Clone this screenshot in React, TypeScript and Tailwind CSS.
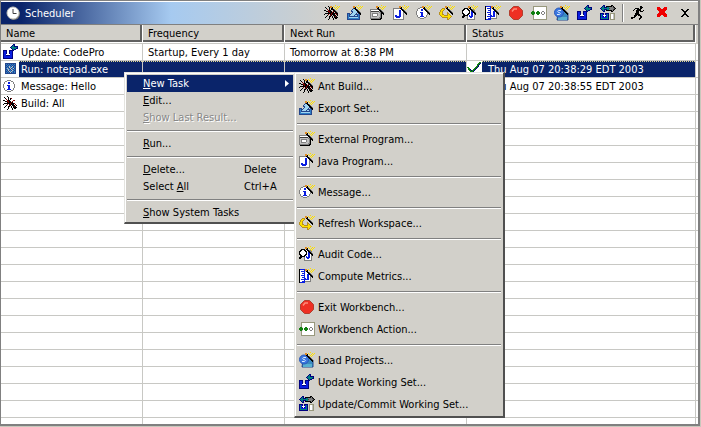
import React from "react";

const palette: Record<string, string> = {
  k: "#000000",
  n: "#000080",
  b: "#0a1ee0",
  t: "#008080",
  w: "#ffffff",
  g: "#808080",
  s: "#c0c0c0",
  d: "#404040",
  r: "#800000",
  R: "#f00000",
  y: "#ffe000",
  o: "#e08a20",
  Y: "#b89020",
  c: "#2f7fc8",
  C: "#9fd4f0",
  m: "#24468c",
  G: "#108010",
  v: "#98987c",
};

const wand = [
  "...........y....",
  "......oo.y...y.y",
  "......ook.y.y.y.",
  ".......kk..y.y..",
  "........kkg.y...",
  ".........kkg....",
  "..........kkg...",
  "...........kkg..",
  "............kk..",
  ".............k..",
];

const art = {
  ant: [
    "................",
    "....k...........",
    ".k...k..........",
    "..k..k.kr.......",
    "...r.k.k........",
    "kk..rkk...rr....",
    "..kkrrkk.r......",
    "....krkkrk......",
    ".kkkkkkrkkkr....",
    "k...r.krkkk.r...",
    "...k..rk.kkk.k..",
    "..k..kk.k.krk...",
    ".k...k..k.kkkk..",
    ".....k...k.kk...",
    "....k....k......",
    "................",
  ],
  exportSet: [
    "................",
    "................",
    "................",
    "......mm........",
    ".....mCCm.......",
    "....mCCCCm......",
    "....mmCCCCm.....",
    ".....mCCCCm.....",
    "mmm.mCCCCm.mm...",
    "mcmmCCCCmmmcm...",
    "mcmCCCCmCCmcm...",
    "mcmmmmmmmmmcm...",
    "mcCCCCCCCCCcm...",
    "mcccccccccccm...",
    "mmmmmmmmmmmmm...",
    "................",
  ],
  external: [
    "................",
    "................",
    "................",
    "................",
    "ggggggggggg.....",
    "gwwwwwwwwsgk....",
    "gddddddddsgk....",
    "gssssssssggk....",
    "gsggggggssgk....",
    "gsgwwwwgssgk....",
    "gsgwwwwgssgk....",
    "gsgggggsssgk....",
    "gssssssssggk....",
    "ggggggggggkk....",
    ".kkkkkkkkkk.....",
    "................",
  ],
  java: [
    "................",
    "................",
    "................",
    "ggggggggg.......",
    "gwwwwwwwwg......",
    "gwwwwwbbwwg.....",
    "gwwwwwbbwwg.....",
    "gwwwwwbbwwg.....",
    "gwwwwwbbwwg.....",
    "gwwwwwbbwwg.....",
    "gwbbwwbbwwg.....",
    "gwbbbbbbwwg.....",
    "gwwbbbbwwwg.....",
    "gwwwwwwwwwg.....",
    "ggggggggggg.....",
    "................",
  ],
  message: [
    "................",
    "................",
    "....gggg........",
    "..ggwwwwgg......",
    ".gwwwbbwwwg.....",
    ".gwwwbbwwwg.....",
    "gwwwwwwwwwwg....",
    "gwwwbbbwwwwg....",
    "gwwwwbbwwwwg....",
    "gwwwwbbwwwwg....",
    ".gwwwbbwwwg.....",
    ".gwwbbbbwwg.....",
    "..ggwwwwgg......",
    "....gggg........",
    "................",
    "................",
  ],
  refresh: [
    "................",
    "................",
    "................",
    "...YYY..........",
    "..YyyY..........",
    ".YyyY...........",
    ".YyY............",
    "YyyY....Y.......",
    "YyyY....YY......",
    "YyyYY...YyY.....",
    ".YyyyYYYYyyY....",
    "..YyyyyyyyyyY...",
    "...YYYYYYyyY....",
    "........YyY.....",
    "........YY......",
    "................",
  ],
  audit: [
    "................",
    "................",
    "................",
    "..kkkk..........",
    ".kkwwkkwwwwg....",
    "kkwwwwkkwwwwg...",
    "kwwwwwwkwbbwg...",
    "kwwwwwwkwbbwg...",
    "kkwwwwkkwbbwg...",
    ".kkwwkkwwbbwg...",
    ".kkkkkwbwbbwg...",
    "kkk..gwbbbbwg...",
    "kk...gwwbbwwg...",
    ".....gwwwwwwg...",
    ".....gggggggg...",
    "................",
  ],
  metrics: [
    "................",
    "kbbbbb..........",
    "kwwwwb..........",
    "kwbbbb..........",
    "kwwwwbwwwg......",
    "kwwbbbwwwwg.....",
    "kwwwwbwwbbwg....",
    "kwbbbbwwbbwg....",
    "kwwwwbwwbbwg....",
    "kwwbbbwwbbwg....",
    "kwwwwbbwbbwg....",
    "kwbbbbbbbbwg....",
    "kwwwwbwwwwwg....",
    "kwwbbbgggggg....",
    "kbbbbb..........",
    "................",
  ],
  action: [
    "................",
    "..vvvvvvvvvvvvvv",
    "..vwwwwwwwwwwwwv",
    "..vwwwwwwwwwwwwv",
    "..vwwwwwwwwwwwwv",
    "..vwwwwwwwwwwwwv",
    ".GG.wwGGwwwggwwv",
    "GGGGwGGGGwgwwgwv",
    "GGGGwGGGGwgwwgwv",
    ".GG.wwGGwwwggwwv",
    "..vwwwwwwwwwwwwv",
    "..vwwwwwwwwwwwwv",
    "..vwwwwwwwwwwwwv",
    "..vwwwwwwwwwwwwv",
    "..vvvvvvvvvvvvvv",
    "................",
  ],
  update: [
    "..........nn....",
    ".........ntn....",
    "........nttnnnn.",
    ".......nttttttn.",
    "........nttttnn.",
    ".........ntnn...",
    "nnnn..nnnnn.....",
    "nbbn..nbbn......",
    "nbbn..nbbn......",
    "nbbnwwnbbn......",
    "nbbwwwwbbn......",
    "nbbnnnnbbn......",
    "nbbbbbbbbn......",
    "nbbbbbbbbn......",
    "nnnnnnnnnn......",
    "................",
  ],
  commit: [
    "...nn......kk...",
    "..ntn.kkkkkkgk..",
    ".nttnnnttggggdk.",
    "nttttttttdggggdk",
    ".nttnnnttggggdk.",
    "..ntn.kkkkkkgk..",
    "...nn......kk...",
    "................",
    "nnnn.nnnn.vvvvv.",
    "ntbn.nbtn.vwwsv.",
    "ntbwwwbtn.vwwsv.",
    "ntbnwnbtn.vwwsv.",
    "ntbbbbbtn.vwwsv.",
    "ntttttttn.vwwsv.",
    "nnnnnnnnn.vvvvv.",
    "................",
  ],
  cross: [
    "................",
    "................",
    "...RRR....RRR...",
    "...RRRR..RRRR...",
    "...RRRRRRRRRR...",
    "....RRRRRRRR....",
    ".....RRRRRR.....",
    ".....RRRRRR.....",
    "....RRRRRRRR....",
    "...RRRRRRRRRR...",
    "...RRRR..RRRR...",
    "...RRR....RRR...",
    "................",
    "................",
    "................",
    "................",
  ],
  close: [
    "................",
    "................",
    "................",
    "................",
    "....kk....kk....",
    ".....kk..kk.....",
    "......kkkk......",
    ".......kk.......",
    ".......kk.......",
    "......kkkk......",
    ".....kk..kk.....",
    "....kk....kk....",
    "................",
    "................",
    "................",
    "................",
  ],
  runner: [
    "................",
    ".........kk.....",
    ".........kkk....",
    "....kkkk.kk.....",
    "...k..kkkk......",
    "..k..kkkkk..k...",
    ".....kkk.kkk....",
    ".....kkk........",
    "....kkkk........",
    "....kkkkk.......",
    "...kkk.kkk......",
    "...kk....kk.....",
    "kkkk.....kk.....",
    "kk......kk......",
    "........k.......",
    "................",
  ],
  check: [
    "................",
    "............GG..",
    "...........GGn..",
    "..........GGn...",
    "..........Gn....",
    ".........GGn....",
    "GG......GGn.....",
    ".GG....GGn......",
    ".GGn..GGn.......",
    "..GGnGGn........",
    "...GGGn.........",
    "....Gn..........",
    "................",
    "................",
    "................",
    "................",
  ],
  program: [
    "................",
    "................",
    "..mmmmmmmmmmm...",
    "..mcmcmcmcmcm...",
    "..mmcmcmcmcmm...",
    "..mcmcscmsmcm...",
    "..mmcmscscmcm...",
    "..mcscmsmcsmm...",
    "..mmcscmscmcm...",
    "..mcmsmcmscmm...",
    "..mmcmscscmcm...",
    "..mcmcmsmcmcm...",
    "..mmmmmmmmmmm...",
    "................",
    "................",
    "................",
  ],
};

type ArtName = keyof typeof art;

function pixels(rows: string[], key: string) {
  return rows.flatMap((row, y) =>
    row.split("").map((ch, x) =>
      palette[ch] ? (
        <rect key={`${key}${x}-${y}`} x={x} y={y} width="1" height="1" fill={palette[ch]} />
      ) : null,
    ),
  );
}

function Svg({ children }: { children: React.ReactNode }) {
  return (
    <svg viewBox="0 0 16 16" className="h-4 w-4 shrink-0" aria-hidden="true">
      {children}
    </svg>
  );
}

function Pix({ name, magic = false }: { name: ArtName; magic?: boolean }) {
  return (
    <svg viewBox="0 0 16 16" shapeRendering="crispEdges" className="h-4 w-4 shrink-0" aria-hidden="true">
      {pixels(art[name], "a")}
      {magic && pixels(wand, "w")}
    </svg>
  );
}

function StopIcon() {
  return (
    <Svg>
      <path d="M5.5 1.5h5l4 4v5l-4 4h-5l-4-4v-5z" fill="#ee3024" stroke="#b04030" />
      <path d="M4 6.500l2-2.500h3" fill="none" stroke="#ff8a78" strokeWidth="1.5" />
    </Svg>
  );
}

function LoadIcon() {
  return (
    <Svg>
      <path d="M4 8l7-3 3 3v7H3z" fill="#3a8ac0" stroke="#24468c" />
      <path d="M4 12h9v3H4z" fill="#58b0d0" />
      <circle cx="5" cy="7.5" r="4.5" fill="#3c78e0" stroke="#2858b8" />
      <path d="M7 5.5H4.500q-1.500 1 0 2h1q1.500 1 0 2H3" fill="none" stroke="#d8ecff" />
      <g shapeRendering="crispEdges">{pixels(wand, "w")}</g>
    </Svg>
  );
}

function ClockIcon() {
  return (
    <Svg>
      <circle cx="9" cy="9" r="6" fill="#707070" />
      <circle cx="8" cy="8" r="6" fill="#fff" stroke="#c8c8c0" />
      <path d="M8 4v4.500h3.500" fill="none" stroke="#404040" />
    </Svg>
  );
}

interface Task {
  label: string;
  icon: React.ReactNode;
}

const taskGroups: Task[][] = [
  [
    { label: "Ant Build...", icon: <Pix name="ant" magic /> },
    { label: "Export Set...", icon: <Pix name="exportSet" magic /> },
  ],
  [
    { label: "External Program...", icon: <Pix name="external" magic /> },
    { label: "Java Program...", icon: <Pix name="java" magic /> },
  ],
  [{ label: "Message...", icon: <Pix name="message" magic /> }],
  [{ label: "Refresh Workspace...", icon: <Pix name="refresh" magic /> }],
  [
    { label: "Audit Code...", icon: <Pix name="audit" magic /> },
    { label: "Compute Metrics...", icon: <Pix name="metrics" magic /> },
  ],
  [
    { label: "Exit Workbench...", icon: <StopIcon /> },
    { label: "Workbench Action...", icon: <Pix name="action" /> },
  ],
  [
    { label: "Load Projects...", icon: <LoadIcon /> },
    { label: "Update Working Set...", icon: <Pix name="update" /> },
    { label: "Update/Commit Working Set...", icon: <Pix name="commit" /> },
  ],
];

function ToolButton({ label, children }: { label: string; children: React.ReactNode }) {
  return (
    <button type="button" aria-label={label} className="flex h-[22px] w-[23px] items-center justify-center">
      {children}
    </button>
  );
}

function TitleBar() {
  return (
    <header className="flex h-6 items-center border-t border-b border-t-white border-b-[#808080] bg-[linear-gradient(90deg,#0a246a_0px,#0a246a_20px,#a6caf0_170px,#d2d0ca_330px)] pr-[2px] pl-1">
      <ClockIcon />
      <h1 className="ml-1 grow pt-[2px] text-white">Scheduler</h1>
      <div role="toolbar" aria-label="Scheduler" className="flex items-center">
        {taskGroups.flat().map((task) => (
          <ToolButton key={task.label} label={task.label}>
            {task.icon}
          </ToolButton>
        ))}
        <span className="mx-[3px] h-[18px] w-[2px] border-l border-[#808080] bg-white" />
        <ToolButton label="Run">
          <Pix name="runner" />
        </ToolButton>
        <ToolButton label="Delete">
          <Pix name="cross" />
        </ToolButton>
        <ToolButton label="Close">
          <Pix name="close" />
        </ToolButton>
      </div>
    </header>
  );
}

interface Row {
  name: string;
  icon: React.ReactNode;
  frequency?: string;
  next?: string;
  status?: string;
  selected?: boolean;
}

const rows: Row[] = [
  {
    name: "Update: CodePro",
    icon: <Pix name="update" />,
    frequency: "Startup, Every 1 day",
    next: "Tomorrow at 8:38 PM",
  },
  {
    name: "Run: notepad.exe",
    icon: <Pix name="program" />,
    status: "Thu Aug 07 20:38:29 EDT 2003",
    selected: true,
  },
  { name: "Message: Hello", icon: <Pix name="message" />, status: "Thu Aug 07 20:38:55 EDT 2003" },
  { name: "Build: All", icon: <Pix name="ant" /> },
];

const emptyRows = Array.from({ length: 19 }, (_, i) => i);

const cell = "h-[17px] border-r border-b border-[#c8c8c4] p-0";
const line = "flex h-4 items-center overflow-hidden";

function HeaderCell({ children }: { children: string }) {
  return (
    <th scope="col" className="border-b border-[#c8c8c4] bg-white pr-px pb-px text-left font-normal">
      <div className="flex h-[17px] items-center border-r-2 border-b-2 border-r-[#606060] border-b-[#606060] bg-[#d2d0ca] pt-[2px] pl-[5px]">
        {children}
      </div>
    </th>
  );
}

function TaskTable() {
  return (
    <table className="w-full table-fixed border-separate border-spacing-0">
      <colgroup>
        <col className="w-[142px]" />
        <col className="w-[142px]" />
        <col className="w-[182px]" />
        <col />
        <col className="w-[2px]" />
      </colgroup>
      <thead>
        <tr>
          <HeaderCell>Name</HeaderCell>
          <HeaderCell>Frequency</HeaderCell>
          <HeaderCell>Next Run</HeaderCell>
          <HeaderCell>Status</HeaderCell>
          <td className="bg-[#d2d0ca] p-0" />
        </tr>
      </thead>
      <tbody>
        {rows.map((row) => {
          const fill = row.selected
            ? "border-t border-dotted border-[#e0d890] bg-[#0a246a] pt-px text-white"
            : "pt-[2px]";
          return (
            <tr key={row.name} aria-selected={row.selected}>
              <td className={cell}>
                <div className="flex h-4 overflow-hidden">
                  <span className="ml-[2px] flex w-4 items-center">{row.icon}</span>
                  <span className={`${line} ${fill} grow pl-[2px]`}>{row.name}</span>
                </div>
              </td>
              <td className={cell}>
                <div className={`${line} ${fill} pl-[5px]`}>{row.frequency}</div>
              </td>
              <td className={cell}>
                <div className={`${line} ${fill} pl-[5px]`}>{row.next}</div>
              </td>
              <td className={cell}>
                <div className="flex h-4 overflow-hidden">
                  <span className="flex w-[15px] items-center">{row.status && <Pix name="check" />}</span>
                  <span className={`${line} ${fill} grow pl-[6px]`}>{row.status}</span>
                </div>
              </td>
              <td className="border-b border-[#c8c8c4] p-0" />
            </tr>
          );
        })}
        {emptyRows.map((n) => (
          <tr key={n}>
            <td className={cell} />
            <td className={cell} />
            <td className={cell} />
            <td className={cell} />
            <td className="border-b border-[#c8c8c4] p-0" />
          </tr>
        ))}
      </tbody>
    </table>
  );
}

function Separator() {
  return (
    <div role="separator" className="flex h-[9px] items-center">
      <div className="h-[2px] grow border-t border-[#808080] bg-white" />
    </div>
  );
}

function MenuItem({
  before = "",
  hot,
  rest,
  shortcut,
  state,
}: {
  before?: string;
  hot: string;
  rest: string;
  shortcut?: string;
  state?: "open" | "disabled";
}) {
  const tone =
    state === "open"
      ? "bg-[#0a246a] text-white"
      : state === "disabled"
        ? "text-[#888888] [text-shadow:1px_1px_white]"
        : "";
  return (
    <button
      type="button"
      role="menuitem"
      disabled={state === "disabled"}
      aria-haspopup={state === "open" ? "menu" : undefined}
      className={`flex h-[17px] w-full items-center pr-1 pl-4 ${tone}`}
    >
      <span className="grow text-left">
        {before}
        <span className="underline underline-offset-1">{hot}</span>
        {rest}
      </span>
      {shortcut && <span className="w-[45px] text-left">{shortcut}</span>}
      {state === "open" && (
        <svg viewBox="0 0 4 7" className="h-[7px] w-1" aria-hidden="true">
          <path d="M0 0l4 3.500L0 7z" fill="#fff" />
        </svg>
      )}
    </button>
  );
}

const menuBox =
  "absolute top-[72px] border-t border-l border-r-2 border-b-2 border-t-[#e4e4e0] border-l-[#e4e4e0] border-r-[#505050] border-b-[#505050] bg-[#d2d0ca] shadow-[inset_1px_1px_white]";

function ContextMenu() {
  return (
    <div role="menu" aria-label="Task" className={`${menuBox} left-[124px] w-[173px] px-[2px] pt-[2px] pb-px`}>
      <MenuItem hot="N" rest="ew Task" state="open" />
      <MenuItem hot="E" rest="dit..." />
      <MenuItem hot="S" rest="how Last Result..." state="disabled" />
      <Separator />
      <MenuItem hot="R" rest="un..." />
      <Separator />
      <MenuItem hot="D" rest="elete..." shortcut="Delete" />
      <MenuItem before="Select " hot="A" rest="ll" shortcut="Ctrl+A" />
      <Separator />
      <MenuItem hot="S" rest="how System Tasks" />
    </div>
  );
}

function NewTaskMenu() {
  return (
    <div role="menu" aria-label="New Task" className={`${menuBox} left-[294px] w-[211px] px-[2px] pt-[2px] pb-px`}>
      {taskGroups.map((group, i) => (
        <React.Fragment key={group[0].label}>
          {i > 0 && <Separator />}
          {group.map((task) => (
            <button
              key={task.label}
              type="button"
              role="menuitem"
              className="flex h-[22px] w-full items-center gap-[3px] pl-[2px] text-left"
            >
              {task.icon}
              <span className="pt-[2px]">{task.label}</span>
            </button>
          ))}
        </React.Fragment>
      ))}
    </div>
  );
}

export default function App() {
  return (
    <div className="relative flex h-screen flex-col overflow-hidden bg-[#c8c8bc] pr-px pb-px font-['DejaVu_Sans_Condensed','DejaVu_Sans',sans-serif] text-[11px] leading-4 whitespace-nowrap text-black">
      <main className="flex min-h-0 grow flex-col overflow-hidden border-t border-r-2 border-b-2 border-l border-[#808080] bg-white">
        <TitleBar />
        <TaskTable />
      </main>
      <ContextMenu />
      <NewTaskMenu />
    </div>
  );
}
